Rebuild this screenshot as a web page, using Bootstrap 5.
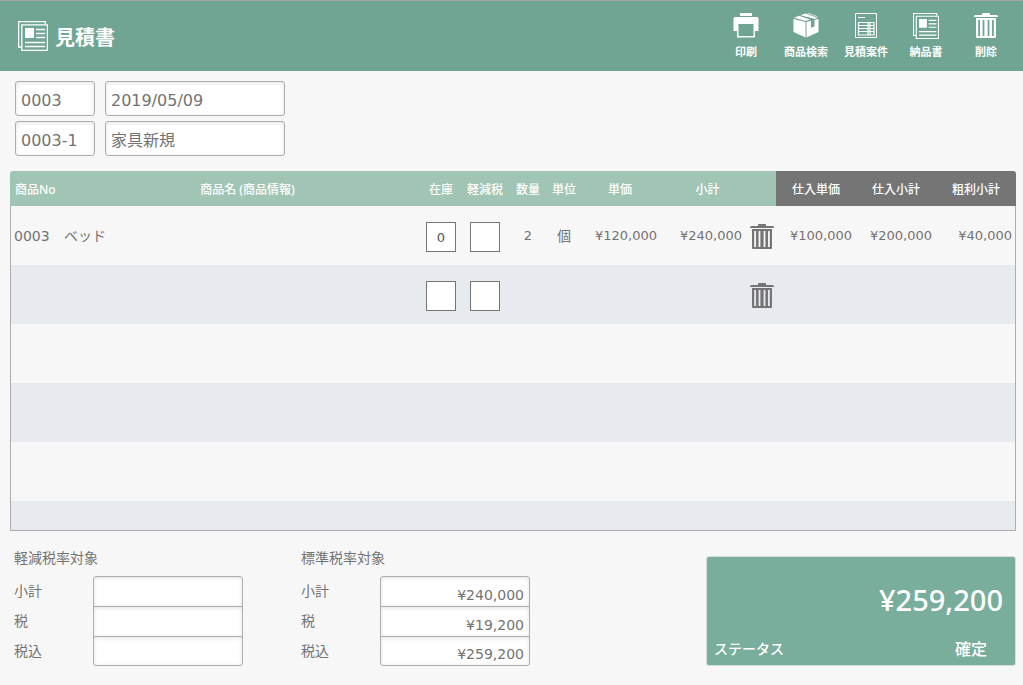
<!DOCTYPE html>
<html lang="ja">
<head>
<meta charset="utf-8">
<meta name="viewport" content="width=device-width, initial-scale=1">
<title>見積書</title>
<link href="https://cdn.jsdelivr.net/npm/bootstrap@5.3.0/dist/css/bootstrap.min.css" rel="stylesheet">
<style>
:root{--ink:#737373;--line:#adadad;--head:"Noto Sans","Noto Sans CJK JP",sans-serif}
body{background:#f7f7f7;color:var(--ink);font-family:"DejaVu Sans","Noto Sans CJK JP",sans-serif;font-size:14px;line-height:20px}
.topbar{background:#70a594;border-top:1px solid #a5a5a5;height:71px;padding:0 7px 0 18px;color:#fff;font-family:var(--head)}
.topbar h1{font-size:20px;line-height:30px;font-weight:700;margin-left:7px}
.topbar nav{margin-top:2px}
.tool{width:60px;color:#fff;font-size:11px;line-height:18px;font-weight:700;white-space:nowrap}
.field{border:1px solid var(--line);border-radius:3px;background:#fff;color:var(--ink);box-shadow:inset 0 1px 4px #0000001c;font-size:16px;height:35px;padding:4px 5px 0;min-width:0}
.field.subject{padding-top:0}
.ids{display:grid;grid-template-columns:80px 180px;gap:5px 10px;padding:10px 15px 15px}
.sheet{margin:0 7px 0 10px}
.lines{width:100%;table-layout:fixed;border-collapse:separate;border-spacing:0}
.lines th{height:35px;background:#a1c5b4;color:#fff;font-family:var(--head);font-weight:500;font-size:12px;line-height:18px;text-align:center;white-space:nowrap;padding:2px 0 0}
.lines th:first-child{border-top-left-radius:3px;text-align:left;padding-left:5px}
.lines th:last-child{border-top-right-radius:3px}
.lines th.cost{background:#757575}
.lines td{height:59px;padding:0 4px;white-space:nowrap}
.lines td.amount{font-size:13px;text-align:right}
.lines td:first-child{border-left:1px solid var(--line);padding:0 3px}
.lines td:last-child{border-right:1px solid var(--line);padding-right:3px}
.lines tbody tr:nth-child(even){background:#e7eaef}
.lines tr.cut td{height:30px;border-bottom:1px solid var(--line)}
.cell{appearance:none;display:block;width:30px;height:30px;margin:3px auto 0;padding:0;border:1px solid #757575;border-radius:0;background:#fff;text-align:center;font-size:13px;color:#555}
input[type=checkbox].cell:checked{background:#757575}
.trash{color:#757575;line-height:0;margin:3px 2px 0 0}
.summary{padding:14px 7px 0 14px}
.taxes{width:229px;padding-top:3px}
.taxes+.taxes{margin-left:58px}
.taxes label{width:79px;height:30px;line-height:30px}
.taxes .field{width:150px;font-size:14px;height:31px;border-radius:0;margin-bottom:-1px;text-align:right;padding:6px 5px 0}
.taxes .rows>div{height:30px}
.taxes .rows>div:first-child .field{border-radius:3px 3px 0 0}
.taxes .rows>div:last-child .field{border-radius:0 0 3px 3px;height:30px}
.total{width:310px;height:110px;background:#78ae9b;border:1px solid #d5dfdb;border-radius:3px;color:#fff;font-family:var(--head);padding:23px 12px 6px 7px;margin-top:11px}
.sum{font-size:29px;line-height:40px;font-weight:500}
</style>
</head>
<body>
<svg class="d-none" aria-hidden="true">
<symbol id="bin" viewBox="0 0 24 26"><path fill="currentColor" fill-rule="evenodd" d="M8 2V1q0-1 1-1h6q1 0 1 1v1h6.500q1.500 0 1.500 1.500V4H0v-.500Q0 2 1.500 2zM2 5h20v19q0 1-1 1H3q-1 0-1-1zM4.200 7v16h1.800V7zM8.600 7v16h1.800V7zM13.600 7v16h1.800V7zM18 7v16h1.800V7z"/></symbol>
<symbol id="news" viewBox="0 0 30 30"><path fill="none" stroke="currentColor" stroke-width="1.300" d="M4 26H.6V.6H27.4V3M3.8 3.8H29.4V29.4H3.8zM18 8.500h9M18 12.500h9M18 16.500h9M7 21.500h20M7 25.500h20"/><path fill="currentColor" d="M7 7h9v10H7z"/></symbol>
</svg>
<header class="topbar d-flex align-items-center">
  <svg width="30" height="30"><use href="#news"/></svg>
  <h1 class="mb-0 pt-1">見積書</h1>
  <nav class="ms-auto d-flex">
    <button class="tool btn p-0 border-0 d-flex flex-column align-items-center gap-1" type="button">
      <svg width="26" height="26" viewBox="0 0 26 26"><path fill="currentColor" fill-rule="evenodd" d="M7 0h12v3H7zM2 4h22q1.500 0 1.500 1.500V18H22v6.500H4V18H.5V5.500Q.5 4 2 4zM5.500 11v12h15V11z"/></svg>印刷</button>
    <button class="tool btn p-0 border-0 d-flex flex-column align-items-center gap-1" type="button">
      <svg width="26" height="26" viewBox="0 0 26 26"><path fill="currentColor" d="M.5 6 12.500 9v15.500L.5 19zM13.500 9 18 7.800v7l3.500-1.200V6.800L25.500 6v13l-12 5.500zM1 4.800 6 2.800 17 6.600l-4.500 1.300zM7.500 2.200 12 .4l12.800 4.300-3.500 1.100zM13.500 0l2 0 9 3.200v.6z"/></svg>商品検索</button>
    <button class="tool btn p-0 border-0 d-flex flex-column align-items-center gap-1" type="button">
      <svg width="26" height="26" viewBox="0 0 26 26"><path fill="none" stroke="currentColor" d="M2.500.5h21v24h-21zM5 4.500h7"/><path fill="none" stroke="currentColor" stroke-width="1.200" d="M5.500 9.500h15.500v12.500H5.500zM5.500 12.500h15.500M5.500 15.500h15.500M5.500 18.500h15.500M15 9.500v12.500M17 9.500v12.500"/></svg>見積案件</button>
    <button class="tool btn p-0 border-0 d-flex flex-column align-items-center gap-1" type="button">
      <svg width="26" height="26"><use href="#news"/></svg>納品書</button>
    <button class="tool btn p-0 border-0 d-flex flex-column align-items-center gap-1" type="button">
      <svg width="26" height="26"><use href="#bin"/></svg>削除</button>
  </nav>
</header>
<main>
  <form class="ids">
    <input class="field" aria-label="見積番号" value="0003"><input class="field" aria-label="日付" value="2019/05/09">
    <input class="field" aria-label="枝番" value="0003-1"><input class="field subject" aria-label="件名" value="家具新規">
  </form>
  <div class="sheet">
    <table class="lines">
      <colgroup><col style="width:50px"><col><col style="width:44px"><col style="width:44px"><col style="width:42px"><col style="width:30px"><col style="width:82px"><col style="width:85px"><col style="width:30px"><col style="width:80px"><col style="width:80px"><col style="width:80px"></colgroup>
      <thead><tr><th>商品No</th><th class="ps-3">商品名 (商品情報)</th><th>在庫</th><th>軽減税</th><th>数量</th><th>単位</th><th>単価</th><th class="ps-2">小計</th><th></th><th class="cost">仕入単価</th><th class="cost">仕入小計</th><th class="cost">粗利小計</th></tr></thead>
      <tbody>
        <tr><td>0003</td><td>ベッド</td><td class="p-0"><input class="cell" aria-label="在庫" value="0"></td><td class="p-0"><input class="cell" type="checkbox" aria-label="軽減税"></td><td class="amount text-center">2</td><td class="text-center">個</td><td class="amount">¥120,000</td><td class="amount">¥240,000</td><td class="p-0 text-end"><button class="trash btn p-0 border-0" type="button" aria-label="削除"><svg width="24" height="26"><use href="#bin"/></svg></button></td><td class="amount">¥100,000</td><td class="amount">¥200,000</td><td class="amount">¥40,000</td></tr>
        <tr><td></td><td></td><td class="p-0"><input class="cell" aria-label="在庫"></td><td class="p-0"><input class="cell" type="checkbox" aria-label="軽減税"></td><td></td><td></td><td></td><td></td><td class="p-0 text-end"><button class="trash btn p-0 border-0" type="button" aria-label="削除"><svg width="24" height="26"><use href="#bin"/></svg></button></td><td></td><td></td><td></td></tr>
        <tr><td></td><td colspan="11"></td></tr>
        <tr><td></td><td colspan="11"></td></tr>
        <tr><td></td><td colspan="11"></td></tr>
        <tr class="cut"><td></td><td colspan="11"></td></tr>
      </tbody>
    </table>
  </div>
  <div class="summary d-flex align-items-start">
    <section class="taxes">
      <div class="mb-2">軽減税率対象</div>
      <div class="rows">
        <div class="d-flex"><label for="r1">小計</label><input id="r1" class="field"></div>
        <div class="d-flex"><label for="r2">税</label><input id="r2" class="field"></div>
        <div class="d-flex"><label for="r3">税込</label><input id="r3" class="field"></div>
      </div>
    </section>
    <section class="taxes">
      <div class="mb-2">標準税率対象</div>
      <div class="rows">
        <div class="d-flex"><label for="s1">小計</label><input id="s1" class="field" value="¥240,000"></div>
        <div class="d-flex"><label for="s2">税</label><input id="s2" class="field" value="¥19,200"></div>
        <div class="d-flex"><label for="s3">税込</label><input id="s3" class="field" value="¥259,200"></div>
      </div>
    </section>
    <section class="total ms-auto d-flex flex-column justify-content-between">
      <div class="sum text-end">¥259,200</div>
      <div class="d-flex justify-content-between fw-medium pe-3"><span>ステータス</span><span class="fs-6">確定</span></div>
    </section>
  </div>
</main>
<script src="https://cdn.jsdelivr.net/npm/bootstrap@5.3.0/dist/js/bootstrap.bundle.min.js"></script>
</body>
</html>
